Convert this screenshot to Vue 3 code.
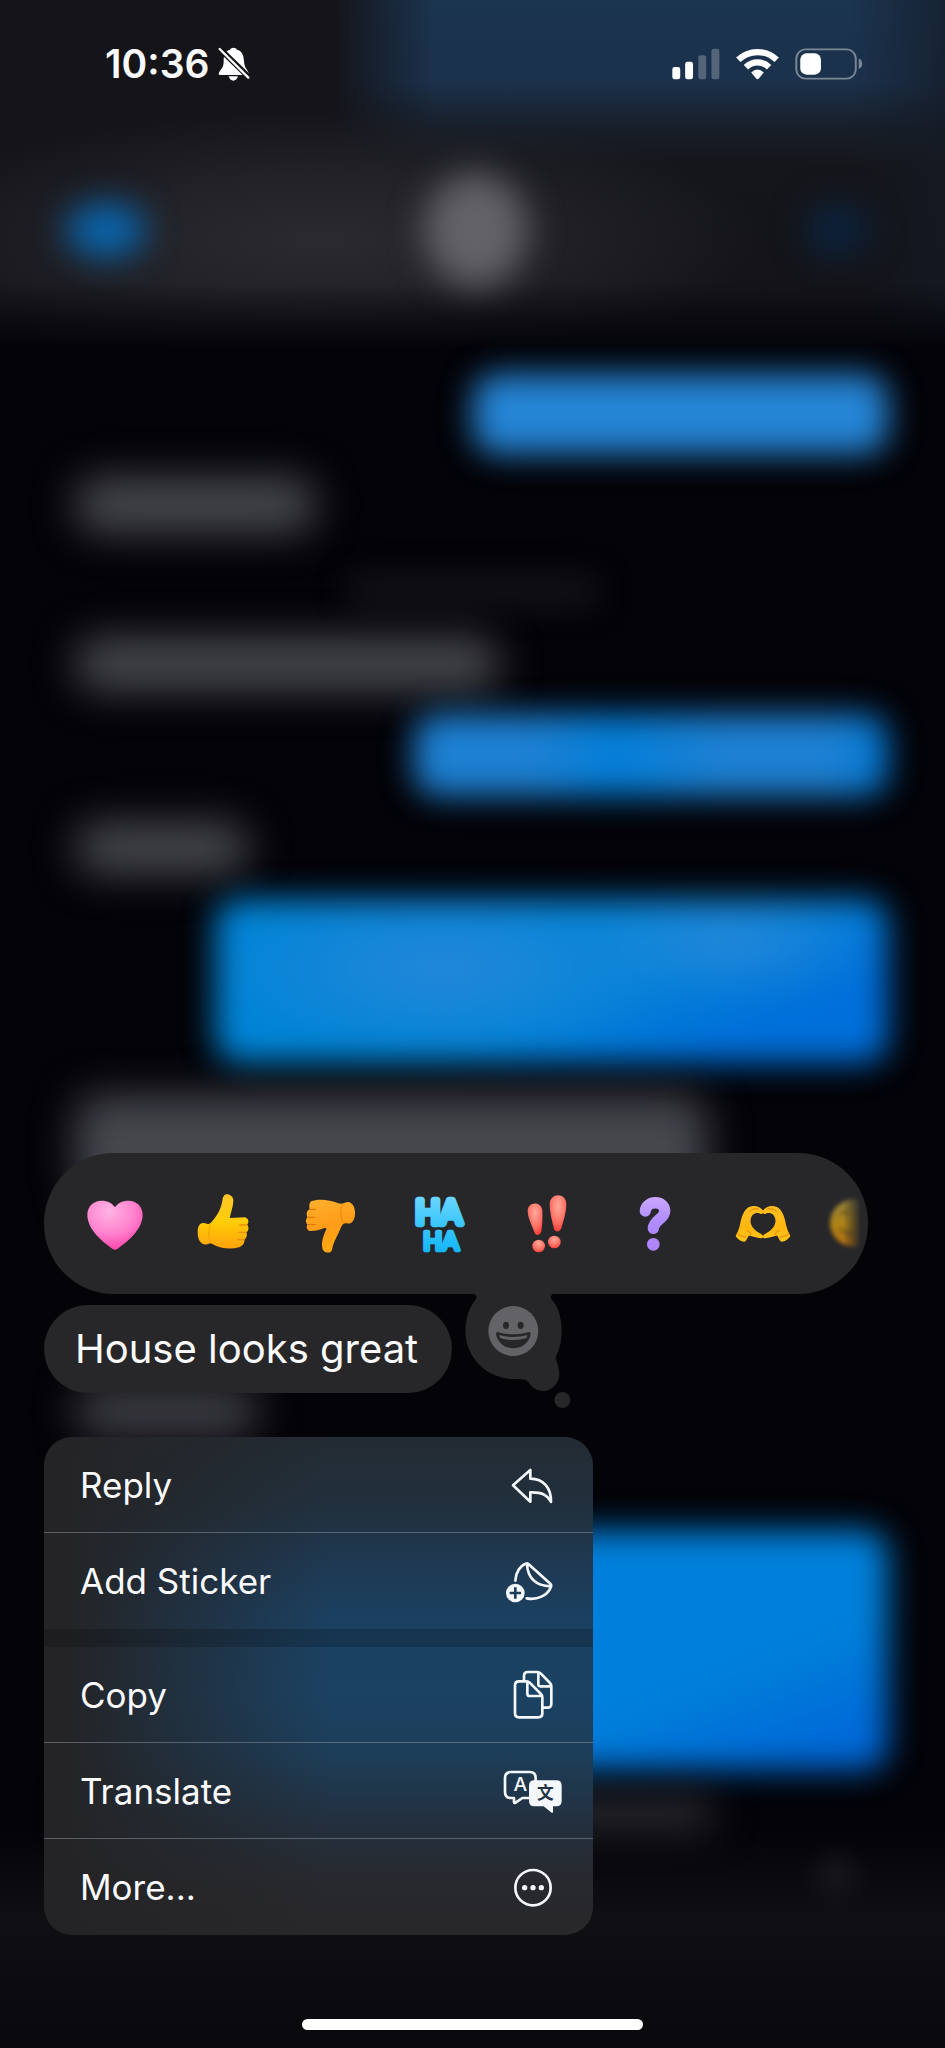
<script setup>
const thread = [
  { side: 'out', kind: 'b1' },
  { side: 'in', kind: 'g1' },
  { side: 'stamp', kind: 's1' },
  { side: 'in', kind: 'g2' },
  { side: 'out', kind: 'b2' },
  { side: 'in', kind: 'g3' },
  { side: 'out', kind: 'b3' },
  { side: 'in', kind: 'g4' },
  { side: 'in', kind: 'g5' },
  { side: 'out', kind: 'b4' },
  { side: 'in', kind: 'g6' },
]
</script>

<template>
  <div class="screen">
    <div class="backdrop" aria-hidden="true">
      <div class="nav-glow">
        <i class="glow back"></i>
        <i class="glow avatar"></i>
        <i class="glow video"></i>
      </div>
      <div class="thread">
        <div v-for="b in thread" :key="b.kind" class="blob" :class="[b.side, b.kind]"></div>
      </div>
      <div class="composer-glow"></div>
    </div>

    <header class="status">
      <div class="clock">
        <time>10:36</time>
        <svg class="bell" viewBox="384 52 94 102" role="img" aria-label="Silent mode">
          <path d="M385 134c0-12 15-16 15-38 0-22 5-32 19-36 2-8 19-8 21 0 15 4 20 16 21 34 1 24 14 28 14 38 0 3-2 4-4 4h-82c-3 0-4-1-4-2zM415 140h28c-2 8-8 13-14 13s-12-5-14-13z" fill="#fff" />
          <path d="M386 55l92 90" stroke="#141419" stroke-width="17" />
          <path d="M388 58l86 86" stroke="#fff" stroke-width="7" stroke-linecap="round" />
        </svg>
      </div>
      <div class="signals">
        <svg class="cell" viewBox="62 53 146 95" role="img" aria-label="Cellular signal">
          <rect x="63" y="110" width="24" height="37" rx="7" fill="#fff" />
          <rect x="102" y="94" width="24" height="53" rx="7" fill="#fff" />
          <rect x="142" y="74" width="24" height="73" rx="7" fill="#fff" opacity=".25" />
          <rect x="182" y="54" width="24" height="93" rx="7" fill="#fff" opacity=".25" />
        </svg>
        <svg class="wifi" viewBox="254 53 130 95" role="img" aria-label="Wi-Fi">
          <g fill="none" stroke="#fff" stroke-width="19">
            <path d="M261 88a83 83 0 0 1 116 0" />
            <path d="M284 110a50 50 0 0 1 70 0" />
          </g>
          <path d="M300 126q19-18 38 0l-15 18q-4 5-8 0z" fill="#fff" />
        </svg>
        <svg class="battery" viewBox="431 52 207 97" role="img" aria-label="Battery">
          <rect x="435" y="56" width="181" height="89" rx="28" fill="none" stroke="#7c8796" stroke-width="6" />
          <path d="M625 84c14 4 14 28 0 32z" fill="#7c8796" />
          <rect x="447" y="68" width="63" height="65" rx="19" fill="#fff" />
        </svg>
      </div>
    </header>

    <main class="focus">
      <div class="reactions" role="toolbar" aria-label="Reactions">
        <button type="button" aria-label="Heart">
          <svg viewBox="0 0 180 180">
            <defs>
              <radialGradient id="pink" cx=".4" cy=".22" r=".85">
                <stop offset="0" stop-color="#ffb4e4" /><stop offset=".55" stop-color="#ff80cd" /><stop offset="1" stop-color="#fb3aa5" />
              </radialGradient>
            </defs>
            <path d="M82 164C56 145 7 108 7 62 7 36 27 20 49 20c19 0 34 8 41 20 7-12 22-20 41-20 22 0 42 16 42 42 0 46-49 83-75 102q-8 6-16 0z" fill="url(#pink)" />
          </svg>
        </button>
        <button type="button" aria-label="Thumbs up">
          <svg viewBox="0 0 180 180">
            <defs>
              <linearGradient id="gold" x1="0" y1="0" x2="0" y2="1">
                <stop offset="0" stop-color="#ffc52a" /><stop offset=".5" stop-color="#ffce08" /><stop offset="1" stop-color="#ffa10a" />
              </linearGradient>
            </defs>
            <path d="M94 4c5-8 28-2 27 16 0 15-7 34-11 52l46-2c13 4 12 18 6 22 7 6 5 20-2 22 4 10 0 20-6 22 2 12-6 20-16 24-28 8-58 2-76-8-8-4-11-4-17-2-15 6-31-4-31-35 0-23 10-31 22-27 8 2 10 4 16 0 20-22 32-43 36-68 1-8 3-13 6-16z" fill="url(#gold)" />
            <path d="M140 93h22M138 115h22M134 137h20" stroke="#ef8a06" stroke-width="4" stroke-linecap="round" />
            <path d="M51 92c-5 16-5 40 2 55" fill="none" stroke="#f0a008" stroke-width="3" />
          </svg>
        </button>
        <button type="button" aria-label="Thumbs down">
          <svg viewBox="0 0 180 180">
            <defs>
              <linearGradient id="orange" x1="0" y1="0" x2=".2" y2="1">
                <stop offset="0" stop-color="#ffb02e" /><stop offset=".55" stop-color="#ff9d18" /><stop offset="1" stop-color="#ffa712" />
              </linearGradient>
            </defs>
            <path d="M30 22c20-8 55-6 82 6 13 4 16-2 28-4 16 0 24 20 22 38-2 20-12 30-24 26-10-2-14 2-20 16-10 26-20 36-25 64-3 12-27 10-29-6-4-22 6-42 12-56 0-6-4-4-14-1-10 3-20 6-34 6-10-1-14-15-8-19-8-6-6-18 0-22-6-8-2-22 6-24-2-10-2-18 4-24z" fill="url(#orange)" />
            <path d="M28 46h16M21 70h20M21 92h22" stroke="#e07a04" stroke-width="4" stroke-linecap="round" />
            <path d="M124 31c-7 16-6 42 4 58" fill="none" stroke="#ec8508" stroke-width="3" />
          </svg>
        </button>
        <button type="button" aria-label="Ha ha">
          <svg viewBox="0 0 180 180">
            <defs>
              <linearGradient id="aqua" x1="0" y1="0" x2="0" y2="1">
                <stop offset="0" stop-color="#74d8ff" /><stop offset=".5" stop-color="#3cc6fb" /><stop offset="1" stop-color="#10b4fb" />
              </linearGradient>
            </defs>
            <text class="haha" text-anchor="middle" fill="url(#aqua)" stroke="url(#aqua)" stroke-linejoin="round">
              <tspan x="89" y="90" font-size="96" stroke-width="20">HA</tspan>
              <tspan x="96" y="169" font-size="74" stroke-width="14">HA</tspan>
            </text>
          </svg>
        </button>
        <button type="button" aria-label="Exclamation">
          <svg viewBox="0 0 180 180">
            <defs>
              <radialGradient id="red" cx=".5" cy=".3" r=".75">
                <stop offset="0" stop-color="#ffaa9c" /><stop offset=".6" stop-color="#ff7065" /><stop offset="1" stop-color="#f9382f" />
              </radialGradient>
            </defs>
            <g fill="url(#red)">
              <path d="M32 52c-1-30 42-32 44-2 1 20 0 44-3 62-3 14-18 14-21 2-7-20-19-40-20-62z" />
              <path d="M98 30c1-35 50-35 50 0 0 25-8 50-15 72-4 14-21 13-23 0-5-22-12-48-12-72z" />
              <circle cx="65" cy="156" r="19" />
              <circle cx="112" cy="144" r="19" />
            </g>
          </svg>
        </button>
        <button type="button" aria-label="Question">
          <svg viewBox="0 0 180 180">
            <defs>
              <linearGradient id="violet" x1="0" y1="0" x2="0" y2="180" gradientUnits="userSpaceOnUse">
                <stop offset="0" stop-color="#d0aaff" /><stop offset=".45" stop-color="#b08cff" /><stop offset="1" stop-color="#ad83f6" />
              </linearGradient>
            </defs>
            <path d="M61 51c2-32 58-34 58 0 0 24-32 26-34 52" fill="none" stroke="url(#violet)" stroke-width="34" stroke-linecap="round" stroke-linejoin="round" />
            <circle cx="85" cy="151" r="19" fill="url(#violet)" />
          </svg>
        </button>
        <button type="button" aria-label="Heart hands">
          <svg viewBox="0 0 181 180">
            <defs>
              <linearGradient id="hands" x1="0" y1="0" x2="0" y2="1">
                <stop offset="0" stop-color="#ffbf22" /><stop offset=".6" stop-color="#ffb70f" /><stop offset="1" stop-color="#ffc51c" />
              </linearGradient>
              <g id="hand">
                <path d="M8 126c4-10 10-18 13-34 4-22 10-38 20-48 14-14 40-10 50 6 2 8-4 12-10 8-12-4-25 0-28 20-2 20 16 34 33 43 7 5 6 13-2 12-12-1-26-6-36-8-3 4-6 12-11 18-10 2-22-6-29-17z" fill="url(#hands)" />
                <path d="M50 52c8-7 16-10 26-7M42 110c8 2 12 7 12 12M14 120c8 6 16 8 25 10" fill="none" stroke="#de8208" stroke-width="3" stroke-linecap="round" />
              </g>
            </defs>
            <use href="#hand" />
            <use href="#hand" transform="translate(181 0) scale(-1 1)" />
          </svg>
        </button>
        <button type="button" class="fading" aria-label="More reactions">
          <svg viewBox="0 0 180 180">
            <defs>
              <linearGradient id="dim" x1="0" y1="0" x2="0" y2="1">
                <stop offset="0" stop-color="#8d7c40" /><stop offset=".5" stop-color="#ad8417" /><stop offset="1" stop-color="#b06c10" />
              </linearGradient>
            </defs>
            <circle cx="80" cy="87" r="71" fill="url(#dim)" />
            <path d="M42 60q10-10 22 0M40 104q18 20 40 14" fill="none" stroke="#6e5416" stroke-width="8" />
          </svg>
        </button>
      </div>

      <div class="message-row">
        <p class="message">House looks great</p>
        <button type="button" class="emoji-tail" aria-label="Choose an emoji">
          <svg viewBox="66 36 390 363">
            <g fill="#27272a">
              <path d="M126 36H372C364 42 360 46 364 54C386 78 395 112 395 150C395 180 388 206 378 226C374 238 388 252 388 278C388 306 366 330 340 330C318 330 304 318 296 304C288 294 276 294 250 294A144 144 0 0 1 106 150C106 112 118 78 138 54C142 46 138 42 126 36Z" />
              <circle cx="397" cy="357" r="24" />
            </g>
            <circle cx="250" cy="150" r="75" fill="#636367" />
            <g fill="#27272a">
              <ellipse cx="228" cy="133" rx="9" ry="11" />
              <ellipse cx="272" cy="133" rx="9" ry="11" />
              <path d="M202 153q48 14 96 0c5 0 4 8 2 14-16 46-84 46-100 0-2-6-3-14 2-14z" />
            </g>
            <path d="M208 162q42 12 84 0l-2 9q-40 12-80 0z" fill="#636367" />
          </svg>
        </button>
      </div>

      <nav class="menu" aria-label="Message actions">
        <button type="button" class="line">
          <span>Reply</span>
          <svg viewBox="0 0 180 180"><path d="M30 91L82 45V71C122 71 145 100 144 141C132 118 115 111 82 112V140Z" /></svg>
        </button>
        <button type="button">
          <span>Add Sticker</span>
          <svg viewBox="0 0 180 180">
            <path d="M37 89C38 64 52 44 68 38q5-2 9 2L142 98q4 4 2 9C134 134 102 148 71 142M72 39C74 82 98 104 143 106" />
            <circle cx="37" cy="126" r="28" fill="#f4f8fc" stroke="none" />
            <path class="cut" d="M20 126h34M37 109v34" />
          </svg>
        </button>
        <hr />
        <button type="button" class="line">
          <span>Copy</span>
          <svg viewBox="0 0 180 180">
            <path d="M48 49H70q6 0 10 4L114 87q4 4 4 10V145q0 12-12 12H48q-12 0-12-12V61q0-12 12-12zM73 50V86q0 7 7 7H117" />
            <path d="M63 47V33q0-12 12-12h28q6 0 10 4L141 54q4 4 4 10v52q0 12-12 12H120M106 22V58q0 6 6 6H144" />
          </svg>
        </button>
        <button type="button" class="line">
          <span>Translate</span>
          <svg viewBox="0 0 180 180">
            <path d="M77 111H58L38 125q-5 3-5-3V111H24Q6 111 6 93V51Q6 33 24 33H80Q98 33 98 51V58" />
            <text class="latin" x="52" y="89" text-anchor="middle">A</text>
            <path class="solid" d="M94 58h66q16 0 16 16v46q0 16-16 16h-10v16q0 6-6 2l-22-18H94q-16 0-16-16V74q0-16 16-16z" />
            <text class="han" x="127" y="115" text-anchor="middle">文</text>
          </svg>
        </button>
        <button type="button">
          <span>More...</span>
          <svg viewBox="0 0 180 180">
            <circle cx="90" cy="92" r="53" />
            <g class="solid"><circle cx="65" cy="92" r="8" /><circle cx="90" cy="92" r="8" /><circle cx="115" cy="92" r="8" /></g>
          </svg>
        </button>
      </nav>
    </main>

    <div class="home"></div>
  </div>
</template>

<style>
body { background: #030308; }
</style>

<style scoped>
.screen {
  position: relative;
  display: flex;
  flex-direction: column;
  min-height: 100vh;
  overflow: hidden;
  box-sizing: border-box;
  padding-bottom: 18px;
  background: #030308;
  color: #fafafc;
  font-family: Inter, "Liberation Sans", sans-serif;
}
button {
  border: 0;
  padding: 0;
  background: none;
  color: inherit;
  font: inherit;
}
svg { display: block; }

/* Blurred conversation */
.backdrop {
  position: absolute;
  inset: 0;
  display: flex;
  flex-direction: column;
}
.nav-glow {
  flex: none;
  display: flex;
  align-items: center;
  justify-content: space-between;
  box-sizing: border-box;
  height: 345px;
  padding: 114px 8% 0 7%;
  background:
    linear-gradient(#0000 82%, #030308 102%),
    radial-gradient(ellipse 440px 130px at 34% 240px, #2a2a30 0, #2a2a3099 50%, transparent 100%),
    linear-gradient(90deg, #141419 35%, #14141900 46%, #14141900 90%, #141a25aa 100%),
    linear-gradient(#1b344f 0, #1b314c 24%, #19283a 30%, #171d27 38%, #15161b 48%, #131318 100%);
}
.glow {
  border-radius: 50%;
  filter: blur(17px);
}
.back { width: 80px; height: 54px; background: #0966b0; }
.avatar { width: 104px; height: 114px; background: #626267; }
.video { width: 64px; height: 52px; background: #0b233e; }
.thread {
  display: flex;
  flex-direction: column;
  padding: 0 6%;
}
.blob {
  flex: none;
  filter: blur(16px);
  border-radius: 24px;
}
.out {
  align-self: flex-end;
  background: #0a7bd6;
}
.in {
  margin-left: 18px;
  background: #47484d;
  filter: blur(20px);
}
.stamp {
  align-self: center;
  background: #18181e;
}
.b1 { width: 50%; height: 80px; margin-top: 29px; background: #2585d6; }
.g1 { width: 29%; height: 56px; margin-top: 23px; }
.s1 { width: 30%; height: 24px; margin-top: 46px; }
.g2 { width: 51%; height: 54px; margin-top: 34px; }
.b2 { width: 57%; height: 82px; margin-top: 23px; background: linear-gradient(90deg, #1d80d2 25%, #037ed8 42%, #1d80d2 65%, #1d80d2 88%, #0077d4); }
.g3 { width: 21%; height: 52px; margin-top: 26px; }
.b3 {
  width: 81%;
  height: 164px;
  margin-top: 25px;
  background:
    radial-gradient(ellipse 24% 40% at 76% 25%, #2487da, transparent),
    radial-gradient(ellipse 36% 56% at 34% 42%, #2487da, transparent),
    linear-gradient(155deg, #0084d6 55%, #006fda 80%);
}
.g4 { width: 76%; height: 110px; margin-top: 32px; background: #46474d; }
.g5 { width: 22%; height: 52px; margin-top: 180px; background: #3d3d44; }
.b4 { width: 72%; height: 240px; margin-top: 93px; background: linear-gradient(160deg, #0080da 65%, #0069d8 90%); }
.g6 { width: 77%; height: 34px; margin-top: 26px; background: #2c2c32; }
.composer-glow {
  flex: 1;
  background:
    radial-gradient(ellipse 34px 34px at 88.5% 46px, #15151b 0, transparent 100%),
    linear-gradient(transparent, #0f0f14 40%, #08080d);
}

/* Status bar */
.status {
  position: relative;
  display: flex;
  align-items: center;
  justify-content: space-between;
  height: 128px;
  padding: 0 82px 0 105px;
}
.clock, .signals {
  display: flex;
  align-items: center;
}
.clock { gap: 9px; }
.clock time {
  font-size: 39px;
  font-weight: 600;
  line-height: 48px;
}
.bell { width: 32px; height: 34px; }
.signals { gap: 16px; }
.cell { width: 48px; height: 32px; }
.wifi { width: 43px; height: 32px; }
.battery { width: 68px; height: 32px; }

/* Focused message */
.focus {
  position: relative;
  margin-top: auto;
  padding: 0 77px 0 44px;
}
.reactions {
  display: flex;
  height: 141px;
  padding-left: 17px;
  box-sizing: border-box;
  overflow: hidden;
  border-radius: 70px;
  background: #272729;
}
.reactions button {
  flex: none;
  display: grid;
  place-items: center;
  width: 108px;
}
.reactions svg {
  width: 60px;
  height: 60px;
  overflow: visible;
}
.reactions .fading {
  justify-items: start;
  padding-left: 10px;
  filter: blur(2px);
  -webkit-mask-image: linear-gradient(90deg, #000 26px, transparent 44px);
  mask-image: linear-gradient(90deg, #000 26px, transparent 44px);
}
.haha { font-family: Lato, sans-serif; font-weight: 400; }
.message-row {
  display: flex;
  align-items: flex-start;
}
.message {
  margin: 11px 0 0;
  padding: 0 34px 0 31px;
  border-radius: 44px;
  background: #272729;
  font-size: 40px;
  line-height: 88px;
  white-space: nowrap;
}
.emoji-tail svg {
  width: 130px;
  height: 121px;
  margin-top: -1px;
}
.menu {
  display: flex;
  flex-direction: column;
  width: 549px;
  max-width: 100%;
  margin-top: 23px;
  overflow: hidden;
  border-radius: 28px;
  background:
    linear-gradient(90deg, #242426 4%, #24242600 52%),
    linear-gradient(#232b33 0, #21303d 14%, #1f3850 24%, #1b4060 36%, #1b4263 52%, #1d3d58 64%, #232f3d 78%, #28292d 90%, #28282b 100%);
}
.menu button {
  display: flex;
  align-items: center;
  justify-content: space-between;
  height: 96px;
  box-sizing: border-box;
  padding: 0 30px 0 36px;
  font-size: 35px;
  text-align: left;
}
.menu .line { border-bottom: 1px solid #8c98a480; }
.menu hr {
  width: 100%;
  height: 18px;
  margin: 0;
  border: 0;
  background: #0000002e;
}
.menu svg {
  width: 60px;
  height: 60px;
  fill: none;
  stroke: #f4f8fc;
  stroke-width: 8;
  stroke-linecap: round;
  stroke-linejoin: round;
}
.menu .cut { stroke: #1d3d59; stroke-linecap: butt; }
.menu .solid { fill: #f4f8fc; stroke: none; }
.menu text {
  stroke: none;
  font-size: 58px;
  font-weight: 500;
  fill: #f4f8fc;
}
.menu .han {
  font-family: "Noto Sans CJK SC", sans-serif;
  font-size: 50px;
  font-weight: 700;
  fill: #223346;
}

.home {
  position: relative;
  align-self: center;
  width: 36%;
  height: 11px;
  margin-top: 84px;
  border-radius: 6px;
  background: #fff;
}
</style>
